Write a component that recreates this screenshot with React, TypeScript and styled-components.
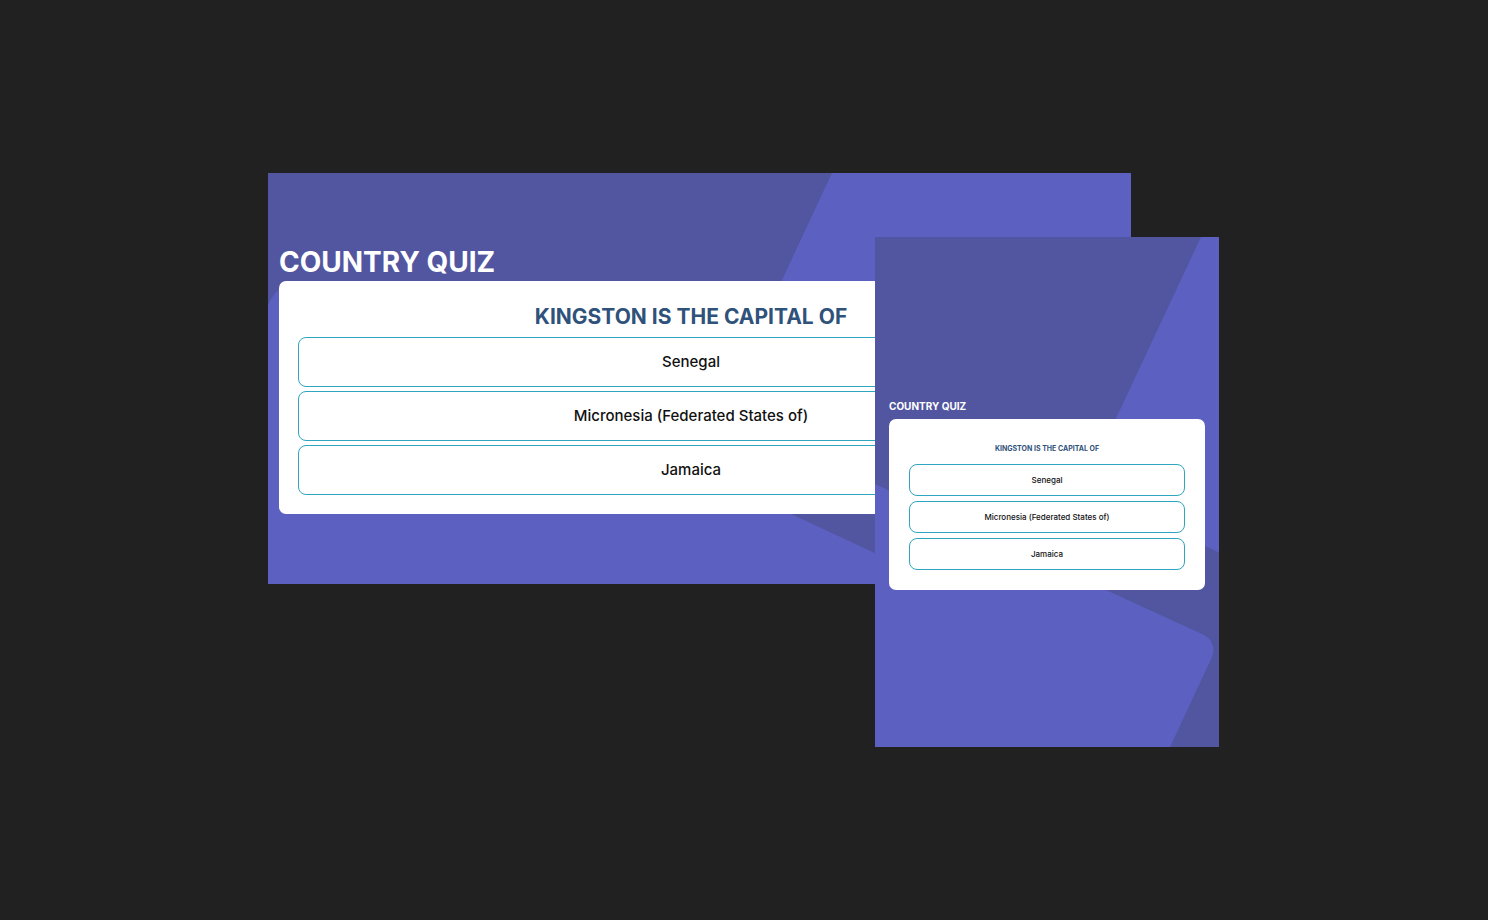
import React from "react";
import styled, { createGlobalStyle, css } from "styled-components";

const GlobalStyle = createGlobalStyle`
  *, *::before, *::after { box-sizing: border-box; }
  body {
    margin: 0;
    background: #212121;
    font-family: Inter, "Open Sans", sans-serif;
  }
`;

type Size = "desktop" | "mobile";

const Page = styled.main`
  min-height: 100vh;
  display: flex;
  align-items: center;
  justify-content: center;
`;

const Stage = styled.div`
  width: 100%;
  max-width: 952px;
  padding-right: 1px;
  display: grid;
  grid-template-columns: 607fr 256fr 88fr;
  align-items: start;
`;

const Screen = styled.section<{ $size: Size }>`
  position: relative;
  z-index: 0;
  grid-row: 1;
  min-width: 0;
  overflow: hidden;
  display: flex;
  flex-direction: column;
  justify-content: center;
  background: #5256a0;
  ${({ $size }) =>
    $size === "desktop"
      ? css`
          grid-column: 1 / 3;
          min-height: 411px;
          padding: 0 28px 0 11px;
        `
      : css`
          grid-column: 2 / 4;
          min-height: 510px;
          margin-top: 64px;
          padding: 0 14px;
        `}
`;

const Backdrop = styled.svg`
  position: absolute;
  inset: 0;
  z-index: -1;
  width: 100%;
  height: 100%;
  fill: #5c61c1;
`;

const Title = styled.h1<{ $size: Size }>`
  margin: 0;
  color: #fff;
  font-weight: 700;
  font-size: ${({ $size }) => ($size === "desktop" ? 28 : 10)}px;
  line-height: ${({ $size }) => ($size === "desktop" ? 38 : 25)}px;
`;

const Card = styled.div<{ $size: Size }>`
  display: flex;
  flex-direction: column;
  gap: ${({ $size }) => ($size === "desktop" ? 4 : 5)}px;
  padding: ${({ $size }) => ($size === "desktop" ? 19 : 20)}px;
  border-radius: 7px;
  background: #fff;
`;

const Question = styled.h2<{ $size: Size }>`
  margin: 0;
  color: #2f527b;
  text-align: center;
  font-weight: 700;
  font-size: ${({ $size }) => ($size === "desktop" ? 21 : 7)}px;
  line-height: ${({ $size }) => ($size === "desktop" ? 33 : 20)}px;
`;

const Option = styled.button<{ $size: Size }>`
  height: ${({ $size }) => ($size === "desktop" ? 50 : 32)}px;
  padding: ${({ $size }) => ($size === "desktop" ? "0 8px 2px" : "0 8px")};
  border: 1px solid #2fa5c0;
  border-radius: 8px;
  background: #fff;
  color: #111;
  font-family: inherit;
  font-weight: 500;
  font-size: ${({ $size }) => ($size === "desktop" ? 15 : 8)}px;
  cursor: pointer;
`;

const backdrops = {
  desktop: {
    viewBox: "0 0 863 411",
    paths: [
      "M564 0 L452 240 L819 411 H863 V0 Z",
      "M-9 152 L1 130 Q14 103 41 116 L673 411 H-9 Z",
    ],
  },
  mobile: {
    viewBox: "0 0 344 510",
    paths: [
      "M326 0 L208 252 L345 316 V0 Z",
      "M0 247 L329 398 A17 17 0 0 1 337 420 L295 510 H0 Z",
    ],
  },
};

const options = ["Senegal", "Micronesia (Federated States of)", "Jamaica"];

function Quiz({ size }: { size: Size }) {
  const { viewBox, paths } = backdrops[size];
  return (
    <Screen $size={size}>
      <Backdrop viewBox={viewBox} preserveAspectRatio="none" aria-hidden="true">
        {paths.map((d) => (
          <path key={d} d={d} />
        ))}
      </Backdrop>
      <Title $size={size}>COUNTRY QUIZ</Title>
      <Card $size={size}>
        <Question $size={size}>KINGSTON IS THE CAPITAL OF</Question>
        {options.map((name) => (
          <Option key={name} type="button" $size={size}>
            {name}
          </Option>
        ))}
      </Card>
    </Screen>
  );
}

export default function App() {
  return (
    <>
      <GlobalStyle />
      <Page>
        <Stage>
          <Quiz size="desktop" />
          <Quiz size="mobile" />
        </Stage>
      </Page>
    </>
  );
}
